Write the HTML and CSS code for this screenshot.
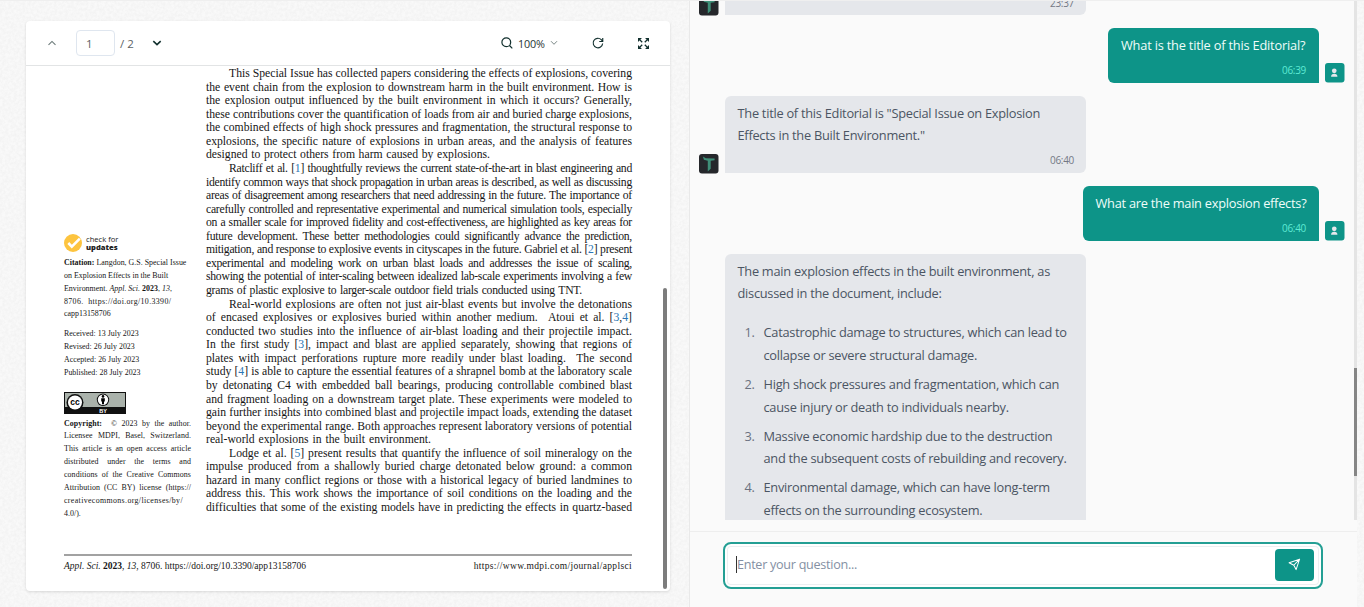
FILE: index.html
```html
<!DOCTYPE html>
<html lang="en">
<head>
<meta charset="utf-8">
<title>Document chat</title>
<link rel="stylesheet" href="styles.css">
</head>
<body>
<main class="app">
  <section class="reader">
    <div class="viewer">
      <header class="toolbar">
        <svg class="chev up" viewBox="0 0 10 6"><path d="M1.5 4.8 5 1.4l3.5 3.4"/></svg>
        <div class="page-input">1</div>
        <span class="page-total">/ 2</span>
        <svg class="chev down" viewBox="0 0 10 6"><path d="M1.3 1.2 5 4.7l3.7-3.5"/></svg>
        <div class="zoom">
          <svg class="lens" viewBox="0 0 12 12"><circle cx="5.3" cy="5.3" r="4.4"/><path d="m8.5 8.5 2.8 2.8"/></svg>
          <span>100%</span>
          <svg class="chev small" viewBox="0 0 10 6"><path d="M2 1.2 5 4.3l3-3.1"/></svg>
        </div>
        <svg class="reload" viewBox="0 0 24 24"><path d="M21.500 2v7h-7M21.300 13A9.500 9.500 0 1 1 18.500 5.300L21 8.500"/></svg>
        <svg class="expand" viewBox="0 0 12 12"><path class="arms" d="M1.500 1.500 4.600 4.600M10.500 1.500 7.400 4.600M1.500 10.500 4.600 7.400M10.500 10.500 7.400 7.400"/><path class="tips" d="M0 0h4.300L0 4.300zM12 0v4.300L7.700 0zM0 12V7.700L4.300 12zM12 12H7.700L12 7.700z"/></svg>
      </header>
      <div class="paper">
        <div class="columns">
          <aside class="notes">
            <div class="check">
              <svg viewBox="0 0 18 18"><circle cx="9" cy="9" r="9"/><path d="m4.300 9 3.500 3.600 8-8"/></svg>
              <div>check for<br><b>updates</b></div>
            </div>
            <div class="note cite">
              <p><b>Citation:</b> Langdon, G.S. Special Issue</p>
              <p>on Explosion Effects in the Built</p>
              <p>Environment. <i>Appl. Sci.</i> <b>2023</b>, <i>13</i>,</p>
              <p class="wide">8706. &nbsp;https://doi.org/10.3390/</p>
              <p>capp13158706</p>
            </div>
            <div class="note dates">
              <p>Received: 13 July 2023</p>
              <p>Revised: 26 July 2023</p>
              <p>Accepted: 26 July 2023</p>
              <p>Published: 28 July 2023</p>
            </div>
            <svg class="license" viewBox="0 0 62 22"><path fill="#111" d="M0 0h62v22H0z"/><path fill="#aab2ab" d="M1 1h60v14H1z"/><circle cx="11" cy="10.500" r="8.500" fill="#111"/><circle cx="11" cy="10.500" r="7" fill="#fff"/><text x="11" y="13.400" font-size="8.500" text-anchor="middle">cc</text><circle cx="39" cy="7.800" r="6.200" fill="#111"/><circle cx="39" cy="7.800" r="5.200" fill="#fff"/><circle cx="39" cy="4.400" r="1.300"/><path d="M37.200 6.200h3.600v3.300h-.8v2.800h-2V9.500h-.8z"/><text x="39" y="20.500" font-size="5.500" fill="#fff" text-anchor="middle">BY</text></svg>
            <div class="note legal">
              <p class="full"><b>Copyright:</b> &nbsp;© 2023 by the author.</p>
              <p class="full">Licensee MDPI, Basel, Switzerland.</p>
              <p class="full">This article is an open access article</p>
              <p class="full">distributed under the terms and</p>
              <p class="full">conditions of the Creative Commons</p>
              <p class="full">Attribution (CC BY) license (https://</p>
              <p class="wide">creativecommons.org/licenses/by/</p>
              <p>4.0/).</p>
            </div>
          </aside>
          <article class="body-text">
            <section>
            <p class="in">This Special Issue has collected papers considering the effects of explosions, covering</p>
            <p>the event chain from the explosion to downstream harm in the built environment. How is</p>
            <p>the explosion output influenced by the built environment in which it occurs? Generally,</p>
            <p>these contributions cover the quantification of loads from air and buried charge explosions,</p>
            <p>the combined effects of high shock pressures and fragmentation, the structural response to</p>
            <p>explosions, the specific nature of explosions in urban areas, and the analysis of features</p>
            <p style="width:284px">designed to protect others from harm caused by explosions.</p>
            </section>
            <section class="tight">
            <p class="in">Ratcliff et al. [<a>1</a>] thoughtfully reviews the current state-of-the-art in blast engineering and</p>
            <p>identify common ways that shock propagation in urban areas is described, as well as discussing</p>
            <p>areas of disagreement among researchers that need addressing in the future. The importance of</p>
            <p>carefully controlled and representative experimental and numerical simulation tools, especially</p>
            <p>on a smaller scale for improved fidelity and cost-effectiveness, are highlighted as key areas for</p>
            <p>future development. These better methodologies could significantly advance the prediction,</p>
            <p>mitigation, and response to explosive events in cityscapes in the future. Gabriel et al. [<a>2</a>] present</p>
            <p>experimental and modeling work on urban blast loads and addresses the issue of scaling,</p>
            <p>showing the potential of inter-scaling between idealized lab-scale experiments involving a few</p>
            <p style="width:376px">grams of plastic explosive to larger-scale outdoor field trials conducted using TNT.</p>
            </section>
            <section>
            <p class="in">Real-world explosions are often not just air-blast events but involve the detonations</p>
            <p>of encased explosives or explosives buried within another medium. &nbsp;Atoui et al. [<a>3</a>,<a>4</a>]</p>
            <p>conducted two studies into the influence of air-blast loading and their projectile impact.</p>
            <p>In the first study [<a>3</a>], impact and blast are applied separately, showing that regions of</p>
            <p>plates with impact perforations rupture more readily under blast loading. &nbsp;The second</p>
            <p>study [<a>4</a>] is able to capture the essential features of a shrapnel bomb at the laboratory scale</p>
            <p>by detonating C4 with embedded ball bearings, producing controllable combined blast</p>
            <p>and fragment loading on a downstream target plate. These experiments were modeled to</p>
            <p>gain further insights into combined blast and projectile impact loads, extending the dataset</p>
            <p>beyond the experimental range. Both approaches represent laboratory versions of potential</p>
            <p style="width:225px">real-world explosions in the built environment.</p>
            </section>
            <section>
            <p class="in">Lodge et al. [<a>5</a>] present results that quantify the influence of soil mineralogy on the</p>
            <p>impulse produced from a shallowly buried charge detonated below ground: a common</p>
            <p>hazard in many conflict regions or those with a historical legacy of buried landmines to</p>
            <p>address this. This work shows the importance of soil conditions on the loading and the</p>
            <p>difficulties that some of the existing models have in predicting the effects in quartz-based</p>
            </section>
          </article>
        </div>
        <footer class="paper-foot">
          <span><i>Appl. Sci.</i> <b>2023</b>, <i>13</i>, 8706. https://doi.org/10.3390/app13158706</span>
          <span class="site">https://www.mdpi.com/journal/applsci</span>
        </footer>
        <div class="paper-thumb"></div>
      </div>
    </div>
  </section>
  <section class="chat">
    <div class="messages">
      <div class="row bot first">
        <svg class="avatar" viewBox="0 0 20 20"><rect width="20" height="20" rx="3" fill="#25272b"/><path d="m4 2.500 3 1.800L16 4.500v2l-4 .5v8l-3 3V7L5 6z" fill="#3f8f78"/></svg>
        <div class="bubble"><time>23:37</time></div>
      </div>
      <div class="row user">
        <div class="bubble"><p class="u1">What is the title of this Editorial?</p><time>06:39</time></div>
        <svg class="avatar" viewBox="0 0 20 20"><rect width="20" height="20" rx="3" fill="#0d9488"/><circle cx="9.500" cy="8" r="2.400"/><path d="M6.200 14c0-2 1.300-3 3.300-3s3.300 1 3.300 3z"/></svg>
      </div>
      <div class="row bot">
        <svg class="avatar" viewBox="0 0 20 20"><rect width="20" height="20" rx="3" fill="#25272b"/><path d="m4 2.500 3 1.800L16 4.500v2l-4 .5v8l-3 3V7L5 6z" fill="#3f8f78"/></svg>
        <div class="bubble"><p>The title of this Editorial is "Special Issue on Explosion<br>Effects in the Built Environment."</p><time>06:40</time></div>
      </div>
      <div class="row user">
        <div class="bubble"><p class="u2">What are the main explosion effects?</p><time>06:40</time></div>
        <svg class="avatar" viewBox="0 0 20 20"><rect width="20" height="20" rx="3" fill="#0d9488"/><circle cx="9.500" cy="8" r="2.400"/><path d="M6.200 14c0-2 1.300-3 3.300-3s3.300 1 3.300 3z"/></svg>
      </div>
      <div class="row bot last">
        <div class="bubble">
          <p>The main explosion effects in the built environment, as<br>discussed in the document, include:</p>
          <ol>
            <li><span>1.</span><div>Catastrophic damage to structures, which can lead to<br>collapse or severe structural damage.</div></li>
            <li><span>2.</span><div>High shock pressures and fragmentation, which can<br>cause injury or death to individuals nearby.</div></li>
            <li><span>3.</span><div>Massive economic hardship due to the destruction<br>and the subsequent costs of rebuilding and recovery.</div></li>
            <li><span>4.</span><div>Environmental damage, which can have long-term<br>effects on the surrounding ecosystem.</div></li>
          </ol>
        </div>
      </div>
      <div class="track"><div class="thumb"></div></div>
    </div>
    <div class="composer">
      <div class="field">
        <span class="caret"></span><span class="placeholder">Enter your question...</span>
        <div class="send"><svg viewBox="0 0 14 14"><path d="M1.200 5.100 12.500 1.300 8.700 12.500 6.300 7.800zM6.300 7.800 12.500 1.300"/></svg></div>
      </div>
    </div>
  </section>
</main>
</body>
</html>
```
FILE: styles.css
```css
* { box-sizing: border-box; }
body, p, ol { margin: 0; padding: 0; }
body {
  width: 1364px; height: 607px; overflow: hidden;
  font-family: "Open Sans", "Noto Sans", sans-serif;
  background: #f9f9f9 url("data:image/svg+xml,%3Csvg xmlns='http://www.w3.org/2000/svg' width='200' height='200'%3E%3Cfilter id='n'%3E%3CfeTurbulence type='fractalNoise' baseFrequency='.35' numOctaves='3' stitchTiles='stitch'/%3E%3CfeColorMatrix values='0 0 0 0 .5 0 0 0 0 .5 0 0 0 0 .5 .2 0 0 0 -.06'/%3E%3C/filter%3E%3Crect width='200' height='200' filter='url(%23n)'/%3E%3C/svg%3E");
}
svg { display: block; flex: none; overflow: visible; }
.app { display: flex; height: 607px; border-top: 1px solid #efefef; }

/* document viewer */
.reader { width: 690px; padding: 20px 0 0 26px; border-right: 1px solid #e9e9e9; }
.viewer { width: 644px; height: 570px; background: #fff; border-radius: 4px; box-shadow: 0 1px 3px rgba(0,0,0,.13); }
.toolbar { height: 45px; display: flex; align-items: center; border-bottom: 1px solid #e2e4e5; color: #5c6266; font-size: 11.5px; }
.chev { width: 10px; height: 6px; fill: none; stroke: #6b7a79; stroke-width: 1.1; }
.chev.up { margin-left: 21px; }
.page-input { width: 39px; height: 26px; margin-left: 19px; padding-left: 9px; border: 1px solid #dfe6ef; border-radius: 4px; line-height: 26px; }
.page-total { margin-left: 5px; width: 16px; white-space: nowrap; }
.chev.down { margin-left: 16px; stroke: #12302e; stroke-width: 1.6; }
.zoom { display: flex; align-items: center; margin-left: 339px; color: #1f3533; font-size: 10.8px; font-weight: 500; }
.zoom span { width: 27px; margin: 0 5px 0 5px; letter-spacing: -.2px; white-space: nowrap; }
.lens { width: 12px; height: 12px; fill: none; stroke: #12302e; stroke-width: 1.2; }
.chev.small { margin-left: -1px; stroke-width: .9; }
.reload { width: 12px; height: 12px; margin-left: 33px; fill: none; stroke: #12302e; stroke-width: 2.3; }
.expand { width: 11px; height: 11px; margin-left: 34px; }
.arms { stroke: #12302e; stroke-width: 1.5; }
.tips { fill: #12302e; }

.paper { position: relative; height: 525px; padding: 1px 38px 0 38px; font-family: "Liberation Serif", serif; color: #161616; }
.columns { display: flex; height: 487px; }
.notes { width: 142px; padding-top: 166px; }
.check { display: flex; gap: 4px; align-items: center; height: 19px; font: 7.6px/8px "Open Sans", sans-serif; color: #222; }
.check b { font-weight: 800; }
.check svg { width: 18px; height: 18px; }
.check circle { fill: #fdc43f; }
.check path { fill: none; stroke: #fff; stroke-width: 2.6; }
.note { width: 127px; font-size: 7.9px; line-height: 12.85px; white-space: nowrap; }
.note p { width: max-content; letter-spacing: .02px; }
.note .full { width: 127px; text-align-last: justify; letter-spacing: .08px; }
.note .wide { letter-spacing: .36px; }
.cite { margin-top: 5px; }
.dates { margin-top: 7px; }
.license { width: 62px; height: 22px; margin-top: 12px; font-family: "Liberation Sans", sans-serif; font-weight: bold; }
.legal { margin-top: 4px; }
.body-text { width: 426px; flex: none; font-size: 11.7px; line-height: 13.57px; }
.body-text p { height: 13.57px; text-align-last: justify; white-space: nowrap; }
.body-text .tight { letter-spacing: -.26px; }
.body-text .in { padding-left: 23px; }
.body-text a { color: #2b77b5; }
.paper-foot { display: flex; justify-content: space-between; border-top: 2px solid #a2a2a2; padding-top: 5px; font-size: 9.5px; line-height: 11px; white-space: nowrap; }
.site { letter-spacing: .34px; }
.paper-thumb { position: absolute; left: 637px; top: 222px; width: 4px; height: 301px; border-radius: 2px; background: #7c7c7c; }

/* conversation */
.chat { width: 667px; background: #fafafa; color: #4b5563; }
.messages { position: relative; height: 519px; overflow: hidden; padding-left: 9px; font-size: 12.8px; letter-spacing: -.26px; line-height: 22.8px; }
.row { display: flex; align-items: flex-end; gap: 6px; margin-bottom: 13px; }
.avatar { width: 19.500px; height: 19.500px; }
.bubble { background: #e5e7eb; white-space: nowrap; }
time { display: block; text-align: right; font-size: 10px; line-height: 13px; color: #747985; letter-spacing: -.3px; }
.bot .bubble { width: 361.500px; height: 77.500px; padding: 6px 12px 0 13px; border-radius: 6px 6px 6px 0; }
.bot time { margin-top: 6.500px; }
.row.first { height: 14px; }
.first .bubble { height: 14px; padding: 0 12px 0 0; border-radius: 0 0 6px 0; }
.first time { margin-top: -4px; }
.user { justify-content: flex-end; padding-right: 12.500px; }
.user .bubble { height: 54.500px; padding: 6px 13px 0; background: #0d9488; color: #f0fdfa; border-radius: 6px 6px 0 6px; }
.user time { color: #5eead4; margin-top: 7px; }
.user circle, .user .avatar path { fill: #e5e7eb; }
.u1 { width: 185px; letter-spacing: -.2px; }
.u2 { width: 210.500px; letter-spacing: -.25px; }
.last { padding-left: 25.500px; }
.last .bubble { height: 330px; }
ol { list-style: none; padding: 16px 0 0 7px; }
li { display: flex; margin-bottom: 6.200px; }
li span { width: 19px; flex: none; color: #6b7280; }
.track { position: absolute; right: 0; top: 0; width: 3px; height: 519px; background: #e4e4e4; }
.thumb { height: 108px; margin-top: 367px; background: #858585; }
.composer { margin-top: 11px; border-top: 1px solid #eee; padding: 10px 34px 0 33px; }
.field { display: flex; align-items: center; height: 47px; padding: 0 7px 2px 11px; background: #fff; border: 2px solid #249f94; border-radius: 8px; box-shadow: inset 0 0 0 2px #fff, inset 0 0 0 3px #eceff1; }
.caret { width: 1px; height: 17px; background: #333; }
.placeholder { font-size: 12.6px; letter-spacing: -.28px; color: #8490a3; }
.send { width: 39px; height: 32px; margin-left: auto; border-radius: 4px; background: #0d9488; display: flex; align-items: center; justify-content: center; }
.send svg { width: 13px; height: 13px; fill: none; stroke: #fff; stroke-width: 1.100; stroke-linejoin: round; }
```
